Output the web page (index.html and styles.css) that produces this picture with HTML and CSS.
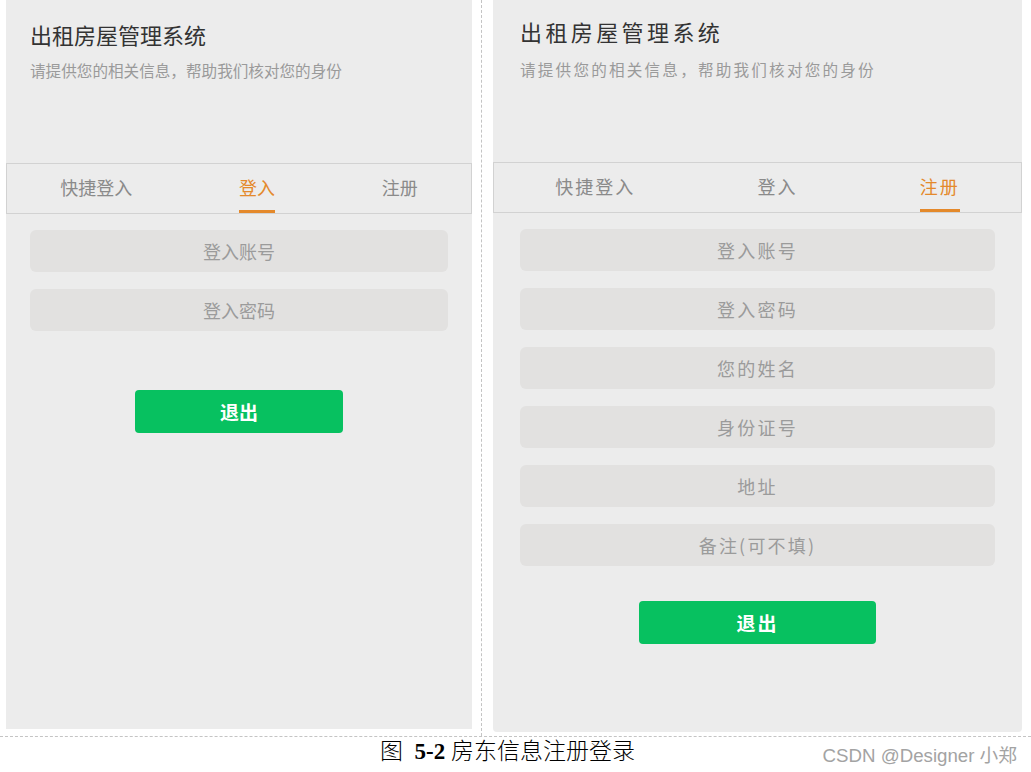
FILE: index.html
```html
<!DOCTYPE html>
<html lang="zh-CN">
<head>
    <meta charset="UTF-8">
    <meta name="viewport" content="width=device-width, initial-scale=1.0">
    <title>房东信息注册登录</title>
    <link rel="stylesheet" href="styles.css">
</head>
<body>
    <div class="figure">
        <div class="cell cell-left">
            <div class="phone narrow">
                <div class="phone-head">
                    <h1>出租房屋管理系统</h1>
                    <p class="sub">请提供您的相关信息，帮助我们核对您的身份</p>
                </div>
                <div class="tabs">
                    <span class="tab">快捷登入</span>
                    <span class="tab active">登入</span>
                    <span class="tab">注册</span>
                </div>
                <form class="fields">
                    <input type="text" placeholder="登入账号">
                    <input type="password" placeholder="登入密码">
                    <button type="button" class="exit">退出</button>
                </form>
            </div>
        </div>
        <div class="cell cell-right">
            <div class="phone wide">
                <div class="phone-head">
                    <h1>出租房屋管理系统</h1>
                    <p class="sub">请提供您的相关信息，帮助我们核对您的身份</p>
                </div>
                <div class="tabs">
                    <span class="tab">快捷登入</span>
                    <span class="tab">登入</span>
                    <span class="tab active">注册</span>
                </div>
                <form class="fields">
                    <input type="text" placeholder="登入账号">
                    <input type="password" placeholder="登入密码">
                    <input type="text" placeholder="您的姓名">
                    <input type="text" placeholder="身份证号">
                    <input type="text" placeholder="地址">
                    <input type="text" placeholder="备注(可不填)">
                    <button type="button" class="exit">退出</button>
                </form>
            </div>
        </div>
    </div>
    <p class="caption">图&nbsp; <b>5-2</b> 房东信息注册登录</p>
    <span class="watermark">CSDN @Designer 小郑</span>
</body>
</html>
```

FILE: styles.css
```css
* {
    box-sizing: border-box;
}

body {
    margin: 0;
    position: relative;
    background: #fff;
    font-family: "Noto Sans CJK SC", "Noto Sans", sans-serif;
}

.figure {
    display: flex;
    align-items: flex-start;
    height: 737px;
    border-bottom: 1px dashed #c4c4c4;
}

.cell {
    height: 100%;
}

.cell-left {
    width: 482px;
    padding-left: 6px;
    border-right: 1px dashed #c4c4c4;
}

.cell-right {
    padding-left: 11px;
}

.phone {
    display: flex;
    flex-direction: column;
    background: #ececec;
}

.phone.narrow {
    width: 466px; height: 729px;
    --pad: 24px;
}

.phone.wide {
    width: 529px; height: 732px;
    border-radius: 0 0 4px 4px;
    --pad: 27px;
}

.phone-head {
    height: 163px;
    padding: 21px var(--pad) 0;
}

.phone h1 {
    margin: 0;
    font-size: 22px; line-height: 26px;
    font-weight: normal;
    color: #333;
}

.phone .sub {
    margin: 13px 0 0;
    font-size: 15.6px; line-height: 20px;
    color: #9a9a9a;
}

.tabs {
    display: flex;
    justify-content: space-around;
    height: 51px;
    border: 1px solid #d2d2d2;
}

.tab {
    display: flex;
    align-items: center;
    padding-bottom: 1px;
    font-size: 18px;
    color: #8a8a8a;
    border-bottom: 3px solid transparent;
}

.tab.active {
    color: #e4892b;
    border-bottom-color: #e4892b;
}

.fields {
    display: flex;
    flex-direction: column;
    gap: 17px;
    margin: 0;
    padding: 16px var(--pad) 0;
}

.fields input {
    height: 42px; width: 100%;
    border: none; outline: none;
    border-radius: 6px;
    background: #e2e1e0;
    font-family: "Noto Sans CJK SC", sans-serif;
    font-size: 18px;
    text-align: center;
    color: #555;
}

.fields input::placeholder {
    color: #9b9b9b;
}

.exit {
    align-self: center;
    width: 49.7%; height: 43px;
    margin-top: 42px;
    border: none;
    border-radius: 4px;
    background: #07c160;
    color: #fff;
    font-family: "Noto Sans CJK SC", sans-serif;
    font-size: 19px; font-weight: bold;
    cursor: pointer;
}

/* the second screenshot is stretched a little wider */
.phone.wide .phone-head { height: 162px; padding-top: 18px; }
.phone.wide h1 { letter-spacing: 3.4px; }
.phone.wide .sub { margin-top: 15px; letter-spacing: 2.2px; }
.phone.wide .tab { letter-spacing: 2px; }
.phone.wide .fields input { letter-spacing: 2.2px; }
.phone.wide .exit { margin-top: 18px; letter-spacing: 2px; }

.caption {
    margin: 0;
    padding-right: 16px;
    text-align: center;
    font-family: "Liberation Serif", "Noto Sans CJK SC", serif;
    font-size: 23px; line-height: 30px;
    font-weight: 300;
    color: #000;
}

.caption b {
    font-weight: bold;
}

.watermark {
    position: absolute;
    right: 14px; top: 740px;
    font-family: "Liberation Sans", "Noto Sans CJK SC", sans-serif;
    font-size: 18.7px;
    color: #a3a3a3;
}
```
